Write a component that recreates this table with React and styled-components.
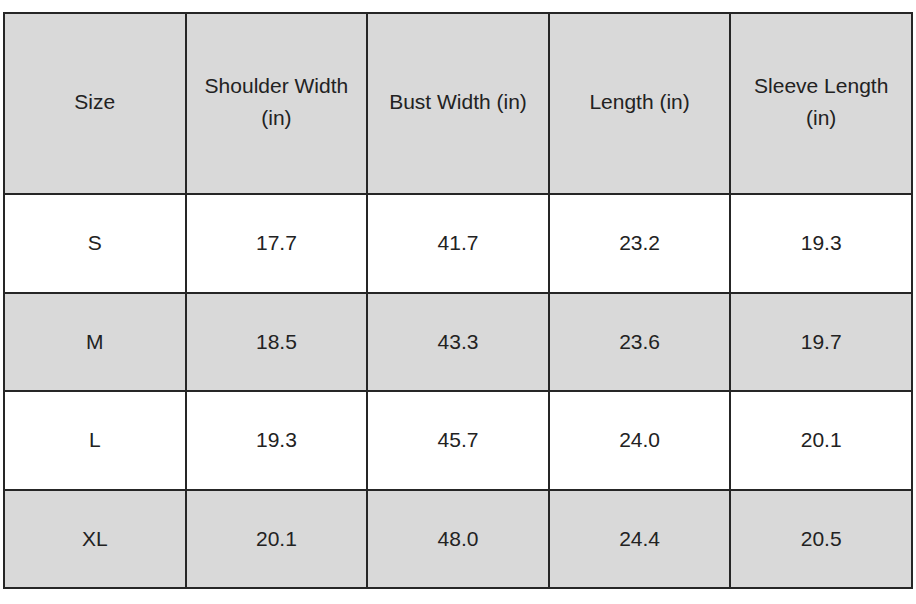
import React from "react"
import styled, { createGlobalStyle } from "styled-components"

const GlobalStyle = createGlobalStyle`
  html, body {
    margin: 0;
    padding: 0;
    background: #ffffff;
  }
  body {
    font-family: "Liberation Sans", Arial, sans-serif;
  }
`

const Page = styled.div`
  padding: 12px 3px 16px 3px;
  width: 916px;
  box-sizing: border-box;
`

const Table = styled.table`
  width: 910px;
  border-collapse: collapse;
  table-layout: fixed;
  border: 2px solid #262626;
  color: #222222;
  font-size: 21px;
`

const Row = styled.tr`
  height: ${props => props.$head ? '181px' : '98.5px'};
  background: ${props => props.$shaded ? '#d9d9d9' : '#ffffff'};
`

const HeadCell = styled.th`
  border: 2px solid #262626;
  font-weight: normal;
  text-align: center;
  vertical-align: middle;
  line-height: 32px;
  padding: 0 12px 4px;
`

const Cell = styled.td`
  border: 2px solid #262626;
  text-align: center;
  vertical-align: middle;
  padding: 0 12px;
`

const headers = [
  "Size",
  "Shoulder Width (in)",
  "Bust Width (in)",
  "Length (in)",
  "Sleeve Length (in)",
]

const rows = [
  ["S", "17.7", "41.7", "23.2", "19.3"],
  ["M", "18.5", "43.3", "23.6", "19.7"],
  ["L", "19.3", "45.7", "24.0", "20.1"],
  ["XL", "20.1", "48.0", "24.4", "20.5"],
]

export default function App() {
  return (
    <>
      <GlobalStyle />
      <Page>
        <Table>
          <thead>
            <Row $head $shaded>
              {headers.map(h => (
                <HeadCell key={h}>{h}</HeadCell>
              ))}
            </Row>
          </thead>
          <tbody>
            {rows.map((r, i) => (
              <Row key={r[0]} $shaded={i % 2 === 1}>
                {r.map((v, j) => (
                  <Cell key={j}>{v}</Cell>
                ))}
              </Row>
            ))}
          </tbody>
        </Table>
      </Page>
    </>
  )
}
